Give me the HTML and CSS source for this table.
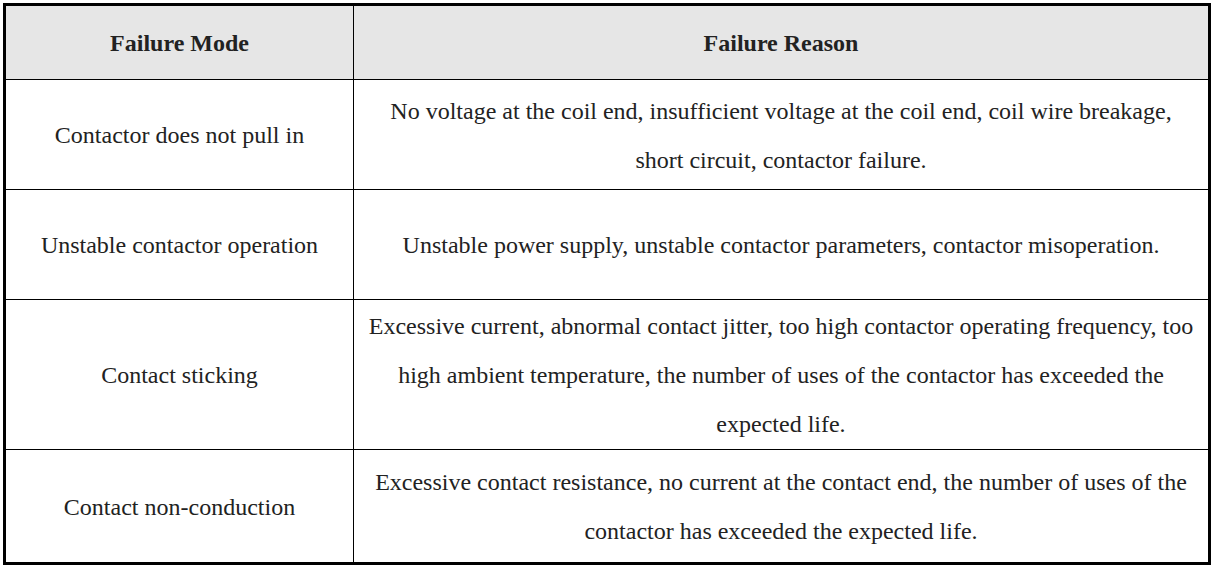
FILE: index.html
```html
<!DOCTYPE html>
<html lang="en">
<head>
<meta charset="utf-8">
<title>Contactor failure modes</title>
<link rel="stylesheet" href="styles.css">
</head>
<body>
<table class="fail-table">
  <colgroup>
    <col class="col-mode">
    <col class="col-reason">
  </colgroup>
  <thead>
    <tr class="row-head">
      <th>Failure Mode</th>
      <th>Failure Reason</th>
    </tr>
  </thead>
  <tbody>
    <tr class="row-a">
      <td>Contactor does not pull in</td>
      <td>No voltage at the coil end, insufficient voltage at the coil end, coil wire breakage, short circuit, contactor failure.</td>
    </tr>
    <tr class="row-b">
      <td>Unstable contactor operation</td>
      <td>Unstable power supply, unstable contactor parameters, contactor misoperation.</td>
    </tr>
    <tr class="row-c">
      <td>Contact sticking</td>
      <td>Excessive current, abnormal contact jitter, too high contactor operating frequency, too high ambient temperature, the number of uses of the contactor has exceeded the expected life.</td>
    </tr>
    <tr class="row-d">
      <td>Contact non-conduction</td>
      <td>Excessive contact resistance, no current at the contact end, the number of uses of the contactor has exceeded the expected life.</td>
    </tr>
  </tbody>
</table>
</body>
</html>
```

FILE: styles.css
```css
html, body {
  margin: 0;
  padding: 0;
  background: #ffffff;
}

body {
  padding: 3px;
  color: #222222;
  font-family: "Liberation Serif", "Times New Roman", serif;
}

.fail-table {
  width: 1208px;
  table-layout: fixed;
  border-collapse: separate;
  border-spacing: 0;
  border: 3px solid #000000;
  font-family: "Liberation Serif", "Times New Roman", serif;
  font-size: 24px;
  line-height: 49px;
}

.col-mode {
  width: 348px;
}

.fail-table th,
.fail-table td {
  box-sizing: border-box;
  padding: 2px 12px 0;
  text-align: center;
  vertical-align: middle;
  border-right: 1px solid #000000;
  border-bottom: 1px solid #000000;
}

.fail-table th:last-child,
.fail-table td:last-child {
  border-right: none;
}

.fail-table tbody tr:last-child td {
  border-bottom: none;
}

.fail-table th {
  background: #e6e6e6;
  font-weight: bold;
}

.row-head th { height: 74px; }
.row-a td { height: 110px; }
.row-b td { height: 110px; }
.row-c td { height: 150px; }
.row-d td { height: 112px; }
```
